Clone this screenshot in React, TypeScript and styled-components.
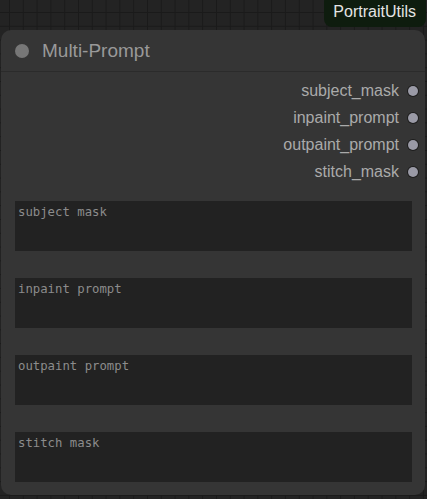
import styled, { createGlobalStyle } from "styled-components";

const GlobalStyle = createGlobalStyle`
  html, body {
    margin: 0;
    padding: 0;
    background: #222;
  }
`;

const Canvas = styled.div`
  position: relative;
  width: 427px;
  height: 499px;
  overflow: hidden;
  padding: 30px 0 0 1px;
  box-sizing: border-box;
  background-color: #232323;
  background-image: linear-gradient(#1a1a1a 1px, transparent 1px),
    linear-gradient(90deg, #1a1a1a 1px, transparent 1px);
  background-size: 13.8px 13.8px;
  background-position: 9px 12px;
  font-family: "Liberation Sans", Arial, sans-serif;
`;

const Badge = styled.div`
  position: absolute;
  top: -6px;
  right: 1px;
  height: 33px;
  padding: 6px 10px 0 9px;
  box-sizing: border-box;
  border-radius: 8px;
  background: #0e1c0e;
  color: #e4e4e4;
  font-size: 16px;
  line-height: 24px;
  z-index: 2;
`;

const Node = styled.div`
  width: 424px;
  height: 465px;
  background: #353535;
  border-radius: 10px;
  display: flex;
  flex-direction: column;
`;

const Title = styled.div`
  height: 41px;
  display: flex;
  align-items: center;
  gap: 13px;
  padding-left: 14px;
  border-bottom: 1px solid #2b2b2b;
  color: #999;
  font-size: 19px;
`;

const Dot = styled.span<{ $size: number; $color: string }>`
  width: ${(p) => p.$size}px;
  height: ${(p) => p.$size}px;
  border-radius: 50%;
  background: ${(p) => p.$color};
  flex: none;
`;

const SlotDot = styled(Dot)`
  box-shadow: 0 0 0 1px #1e1e1e;
`;

const Outputs = styled.div`
  display: flex;
  flex-direction: column;
  align-items: flex-end;
  padding: 5px 7px 0 0;
`;

const Slot = styled.div`
  height: 27px;
  display: flex;
  align-items: center;
  gap: 9px;
  color: #aaa;
  font-size: 16px;
`;

const Fields = styled.div`
  display: flex;
  flex-direction: column;
  gap: 27px;
  padding: 16px 13px 0 14px;
`;

const Field = styled.div`
  height: 50px;
  background: #222;
  padding: 3px 3px;
  box-sizing: border-box;
  color: #8c8c8c;
  font-family: "DejaVu Sans Mono", monospace;
  font-size: 12.3px;
  line-height: 16px;
`;

const outputs = ["subject_mask", "inpaint_prompt", "outpaint_prompt", "stitch_mask"];
const fields = ["subject mask", "inpaint prompt", "outpaint prompt", "stitch mask"];

const App = () => {
  return (
    <Canvas>
      <GlobalStyle />
      <Badge>PortraitUtils</Badge>
      <Node>
        <Title>
          <Dot $size={14} $color="#777" />
          Multi-Prompt
        </Title>
        <Outputs>
          {outputs.map((o) => (
            <Slot key={o}>
              {o}
              <SlotDot $size={10} $color="#9a9aa6" />
            </Slot>
          ))}
        </Outputs>
        <Fields>
          {fields.map((f) => (
            <Field key={f}>{f}</Field>
          ))}
        </Fields>
      </Node>
    </Canvas>
  );
};

export default App;
